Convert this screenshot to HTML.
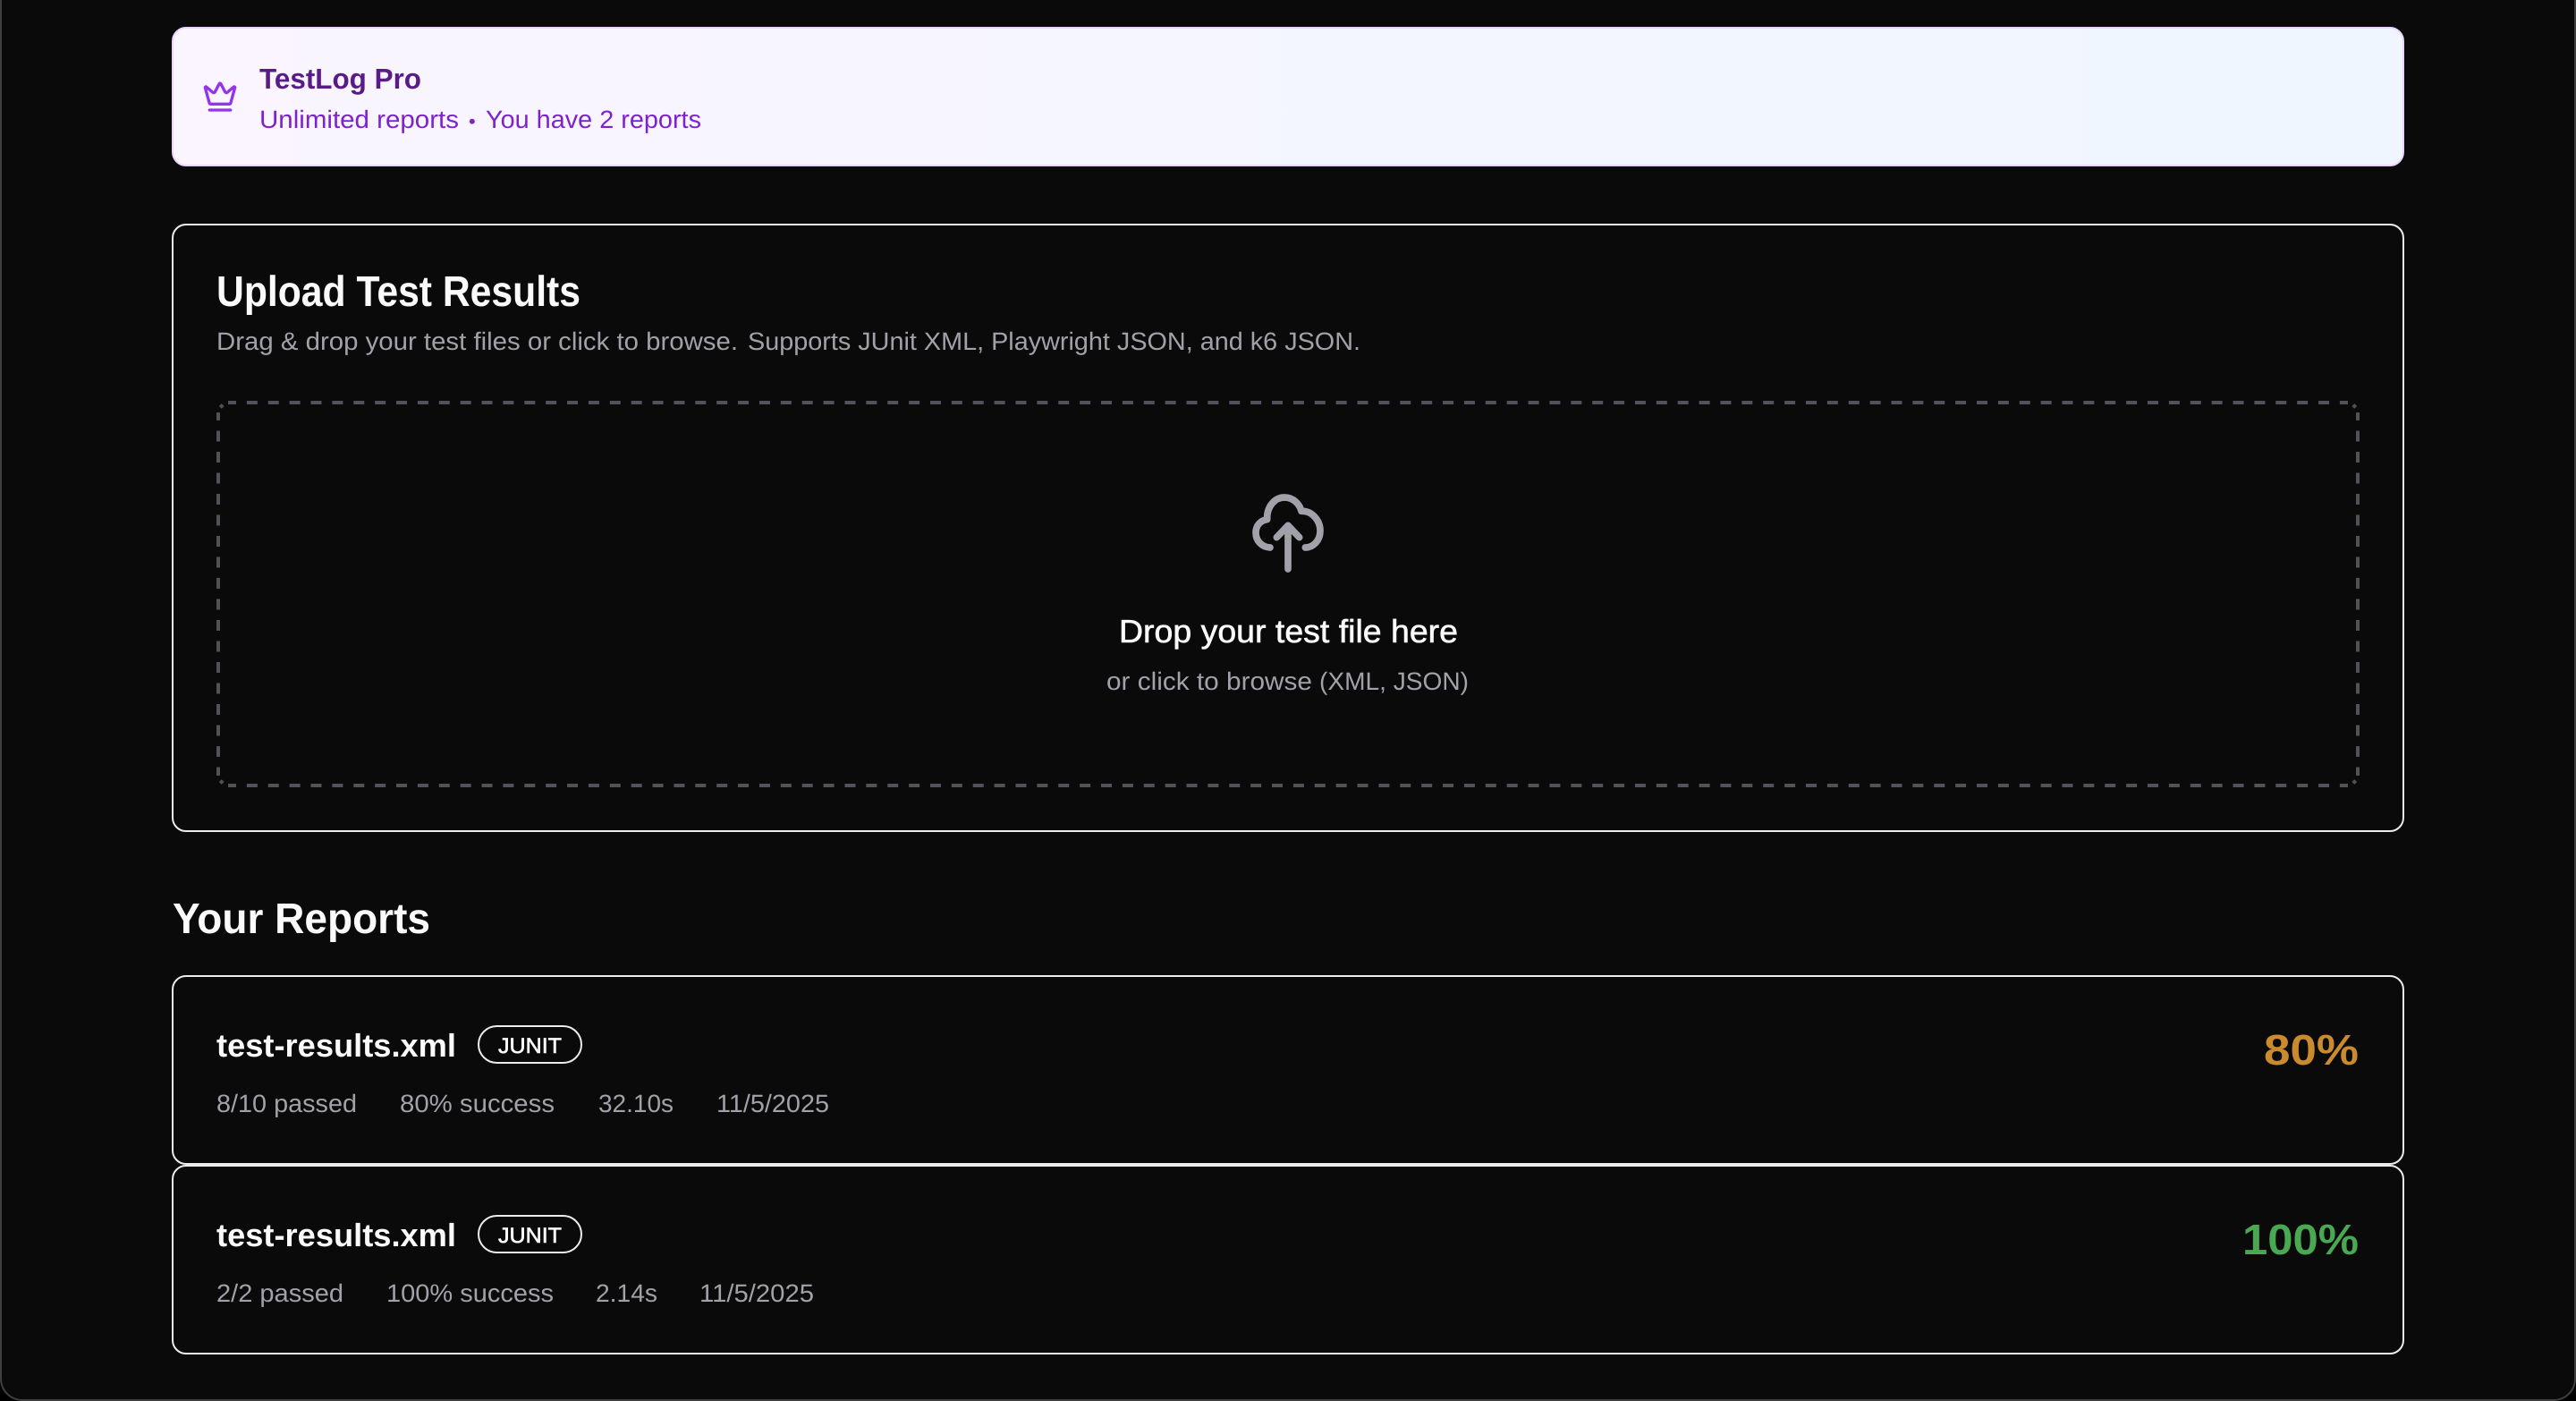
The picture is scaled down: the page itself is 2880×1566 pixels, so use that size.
<!DOCTYPE html>
<html lang="en"><head><meta charset="utf-8"><title>TestLog Pro</title>
<style>
html,body{margin:0;padding:0;background:#000;width:2880px;height:1566px;overflow:hidden}
svg{display:block;position:absolute;left:0;top:0}
text{font-family:"Liberation Sans",sans-serif;text-rendering:geometricPrecision;white-space:pre}
.b{font-weight:700}
.m{stroke-width:.6px}
</style></head><body>
<svg width="2880" height="1566" viewBox="0 0 2880 1566" xmlns="http://www.w3.org/2000/svg">
<defs><linearGradient id="g" x1="0" y1="0" x2="1" y2="0"><stop offset="0" stop-color="#faf5ff"/><stop offset="1" stop-color="#eff6ff"/></linearGradient></defs>
<rect x="1" y="-40" width="2878" height="1605" rx="24" fill="#0a0a0a" stroke="#3f3f3f" stroke-width="2"/>

<rect x="193" y="31" width="2494" height="154" rx="15" fill="url(#g)" stroke="#e9d5ff" stroke-width="2"/>
<g transform="translate(226 88) scale(1.6667)" fill="none" stroke="#9333ea" stroke-width="2" stroke-linecap="round" stroke-linejoin="round">
<path d="M11.562 3.266a.5.5 0 0 1 .876 0L15.39 8.87a1 1 0 0 0 1.516.294L21.183 5.5a.5.5 0 0 1 .798.519l-2.834 10.246a1 1 0 0 1-.956.734H5.81a1 1 0 0 1-.957-.734L2.02 6.02a.5.5 0 0 1 .798-.519l4.276 3.664a1 1 0 0 0 1.516-.294z"/><path d="M5 21h14"/></g>
<text class="b" x="290" y="99" font-size="32" fill="#581c87" textLength="181" lengthAdjust="spacingAndGlyphs">TestLog Pro</text>
<text x="290" y="143" font-size="28" fill="#7e22ce" textLength="223" lengthAdjust="spacingAndGlyphs">Unlimited reports</text>
<text x="524" y="143" font-size="22" fill="#7e22ce">•</text>
<text x="543" y="143" font-size="28" fill="#7e22ce" textLength="241" lengthAdjust="spacingAndGlyphs">You have 2 reports</text>

<rect x="193" y="251" width="2494" height="678" rx="15" fill="#0a0a0a" stroke="#ececec" stroke-width="2"/>
<text class="b" x="242" y="342" font-size="48" fill="#fafafa" textLength="407" lengthAdjust="spacingAndGlyphs">Upload Test Results</text>
<text x="242" y="391" font-size="28" fill="#a1a1aa" textLength="583" lengthAdjust="spacingAndGlyphs">Drag &amp; drop your test files or click to browse.</text>
<text x="836" y="391" font-size="28" fill="#a1a1aa" textLength="685" lengthAdjust="spacingAndGlyphs">Supports JUnit XML, Playwright JSON, and k6 JSON.</text>

<g fill="none" stroke="#52525b" stroke-width="4">
<path d="M255 450H2625M255 878H2625" stroke-dasharray="12 11.878" stroke-dashoffset="3"/>
<path d="M244 461V867M2636 461V867" stroke-dasharray="12 11.5" stroke-dashoffset="3"/>
<path d="M246.3 455.4L249.1 452.6M2633.7 455.4L2630.9 452.6M246.3 872.6L249.1 875.4M2633.7 872.6L2630.9 875.4"/>
</g>

<g transform="translate(1340 530) scale(.33333)" fill="none" stroke="#a1a1aa" stroke-width="23" stroke-linecap="round" stroke-linejoin="round">
<path d="M240 246C210 244 192 222 192 196C192 172 208 155 230 152C228 110 255 78 288 78C318 78 338 100 345 124C380 122 408 155 408 190C408 222 385 246 358 246"/>
<path d="M300 318V172M262 212L300 172L338 212"/></g>
<text class="m" x="1251" y="718" font-size="36" fill="#fafafa" stroke="#fafafa" textLength="379" lengthAdjust="spacingAndGlyphs">Drop your test file here</text>
<text x="1237" y="771" font-size="28" fill="#a1a1aa" textLength="230" lengthAdjust="spacingAndGlyphs">or click to browse</text>
<text x="1475" y="771" font-size="28" fill="#a1a1aa" textLength="167" lengthAdjust="spacingAndGlyphs">(XML, JSON)</text>

<text class="b" x="193" y="1043" font-size="48" fill="#fafafa" textLength="288" lengthAdjust="spacingAndGlyphs">Your Reports</text>

<rect x="193" y="1091" width="2494" height="210" rx="15" fill="#0a0a0a" stroke="#ececec" stroke-width="2"/>
<text class="b" x="242" y="1181" font-size="36" fill="#fafafa" textLength="268" lengthAdjust="spacingAndGlyphs">test-results.xml</text>
<rect x="535" y="1147" width="115" height="41" rx="20.5" fill="none" stroke="#ececec" stroke-width="2"/>
<text class="m" x="557" y="1177" font-size="24" fill="#fafafa" stroke="#fafafa" stroke-width=".3" textLength="71" lengthAdjust="spacingAndGlyphs">JUNIT</text>
<text x="242" y="1243" font-size="28" fill="#a1a1aa" textLength="157" lengthAdjust="spacingAndGlyphs">8/10 passed</text>
<text x="447" y="1243" font-size="28" fill="#a1a1aa" textLength="173" lengthAdjust="spacingAndGlyphs">80% success</text>
<text x="669" y="1243" font-size="28" fill="#a1a1aa" textLength="84" lengthAdjust="spacingAndGlyphs">32.10s</text>
<text x="801" y="1243" font-size="28" fill="#a1a1aa" textLength="126" lengthAdjust="spacingAndGlyphs">11/5/2025</text>
<text class="b" x="2531" y="1190" font-size="48" fill="#c98b2d" textLength="106" lengthAdjust="spacingAndGlyphs">80%</text>

<rect x="193" y="1303" width="2494" height="210" rx="15" fill="#0a0a0a" stroke="#ececec" stroke-width="2"/>
<text class="b" x="242" y="1393" font-size="36" fill="#fafafa" textLength="268" lengthAdjust="spacingAndGlyphs">test-results.xml</text>
<rect x="535" y="1359" width="115" height="41" rx="20.5" fill="none" stroke="#ececec" stroke-width="2"/>
<text class="m" x="557" y="1389" font-size="24" fill="#fafafa" stroke="#fafafa" stroke-width=".3" textLength="71" lengthAdjust="spacingAndGlyphs">JUNIT</text>
<text x="242" y="1455" font-size="28" fill="#a1a1aa" textLength="142" lengthAdjust="spacingAndGlyphs">2/2 passed</text>
<text x="432" y="1455" font-size="28" fill="#a1a1aa" textLength="187" lengthAdjust="spacingAndGlyphs">100% success</text>
<text x="666" y="1455" font-size="28" fill="#a1a1aa" textLength="69" lengthAdjust="spacingAndGlyphs">2.14s</text>
<text x="782" y="1455" font-size="28" fill="#a1a1aa" textLength="128" lengthAdjust="spacingAndGlyphs">11/5/2025</text>
<text class="b" x="2507" y="1402" font-size="48" fill="#4aa853" textLength="130" lengthAdjust="spacingAndGlyphs">100%</text>
</svg>
</body></html>
